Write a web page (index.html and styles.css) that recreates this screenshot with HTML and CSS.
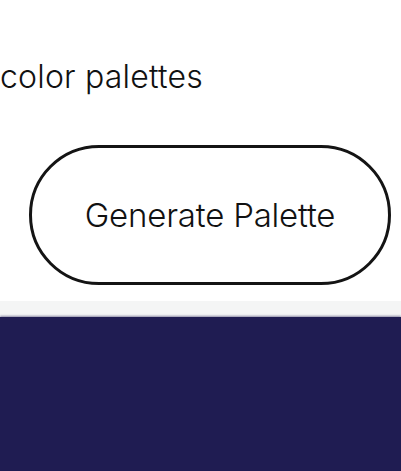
FILE: index.html
```html
<!DOCTYPE html>
<html lang="en">
<head>
  <meta charset="UTF-8" />
  <meta name="viewport" content="width=device-width, initial-scale=1.0"/>
  <title>Palette Generator</title>
  <link rel="stylesheet" href="styles.css">
</head>
<body>

  <header class="hero">
    <p class="tagline">color palettes</p>
    <div class="actions">
      <button class="generate-btn" id="generateBtn">Generate Palette</button>
    </div>
  </header>

  <div class="divider"></div>
  <section class="palette"></section>

</body>
</html>
```

FILE: styles.css
```css
* { box-sizing: border-box; }
body {
  font-family: Inter, 'Noto Sans', sans-serif;
  background: #fff;
  color: #111;
  margin: 0;
  overflow: hidden;
}

.hero {
  padding-top: 57px;
}

.tagline {
  margin: 0;
  font-size: 32px;
  font-weight: 300;
  line-height: 40px;
  letter-spacing: 0.2px;
}

.actions {
  padding: 48px 10px 16px 29px;
}

.generate-btn {
  display: block;
  width: 362px;
  height: 140px;
  border: 3px solid #141414;
  border-radius: 70px;
  background: #fff;
  font-family: inherit;
  font-size: 33px;
  font-weight: 300;
  color: #111;
  letter-spacing: -0.2px;
  cursor: pointer;
}

.divider {
  height: 16px;
  background: #f4f5f5;
}

.palette {
  height: 154px;
  background: #1f1c52;
  box-shadow: 0 -1px 2px rgba(31, 28, 82, 0.5);
}
```
